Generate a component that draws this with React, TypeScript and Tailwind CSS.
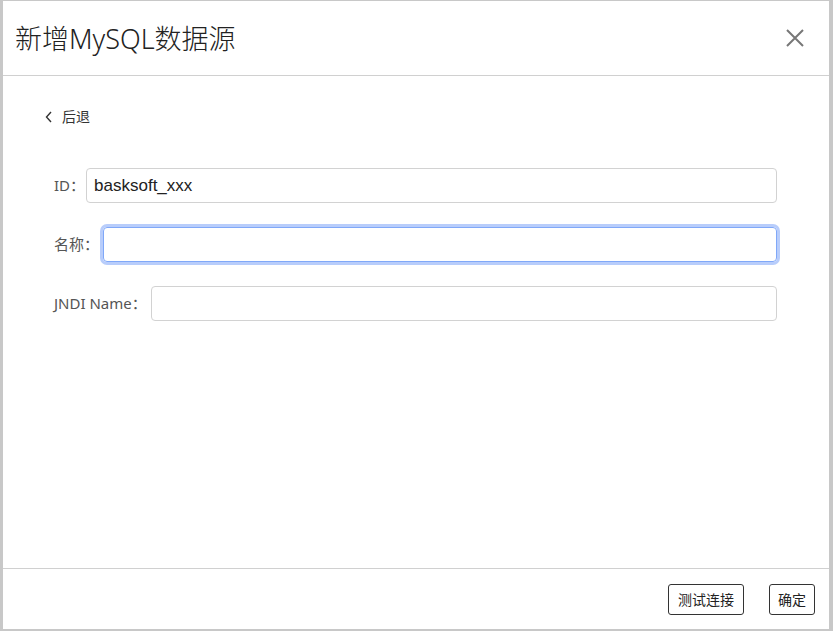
import React from 'react';

const Field: React.FC<{ label: string; value?: string; focused?: boolean; gap?: string }> = ({ label, value, focused, gap = 'mr-[3px]' }) => (
  <div className="flex items-center">
    <label className={`text-[15px] text-[#555] whitespace-nowrap shrink-0 ${gap}`}>{label}</label>
    <input
      defaultValue={value}
      className={
        focused
          ? 'flex-1 h-[35px] rounded-[4px] border border-[#80a8f8] ring-[3px] ring-[#b8cdfb] px-[7px] text-[17px] text-[#222] outline-none font-["Liberation_Sans",Arial,sans-serif]'
          : 'flex-1 h-[35px] rounded-[4px] border border-[#d2d2d2] px-[7px] text-[17px] text-[#222] outline-none font-["Liberation_Sans",Arial,sans-serif]'
      }
    />
  </div>
);

export default function App() {
  return (
    <div className="w-[833px] h-[631px] bg-[#c8c8c8] pl-[3px] pr-[4px] pb-[2px] pt-px font-['Noto_Sans','Noto_Sans_CJK_SC',sans-serif]">
      <div className="bg-white h-full flex flex-col">
        {/* Header */}
        <div className="h-[75px] border-b border-[#d0d0d0] flex items-center justify-between pl-[12px] pr-[24px]">
          <h1 className="text-[27px] text-[#222] font-light leading-none">新增MySQL数据源</h1>
          <button className="text-[#777]">
            <svg width="20" height="20" viewBox="0 0 20 20" stroke="currentColor" strokeWidth="2" fill="none">
              <path d="M2 2L18 18M18 2L2 18" />
            </svg>
          </button>
        </div>

        {/* Body */}
        <div className="flex-1 pl-[39px] pr-[52px] pt-[30px]">
          <div className="flex items-center gap-[9px] text-[14px] text-[#333] pl-[3px]">
            <svg width="8" height="12" viewBox="0 0 8 12" stroke="#333" strokeWidth="1.4" fill="none">
              <path d="M6 1L1.5 6L6 11" />
            </svg>
            <span>后退</span>
          </div>

          <div className="mt-[41px] pl-[12px] flex flex-col gap-[24px]">
            <Field label="ID：" value="basksoft_xxx" gap="mr-[1px]" />
            <Field label="名称：" focused gap="mr-[4px]" />
            <Field label="JNDI Name：" gap="mr-[4px]" />
          </div>
        </div>

        {/* Footer */}
        <div className="h-[61px] border-t border-[#d0d0d0] flex items-center justify-end gap-[25px] pr-[14px]">
          <button className="h-[31px] px-[9px] border border-[#333] rounded-[3px] text-[14px] text-[#222]">测试连接</button>
          <button className="h-[31px] px-[8px] border border-[#333] rounded-[3px] text-[14px] text-[#222]">确定</button>
        </div>
      </div>
    </div>
  );
}
